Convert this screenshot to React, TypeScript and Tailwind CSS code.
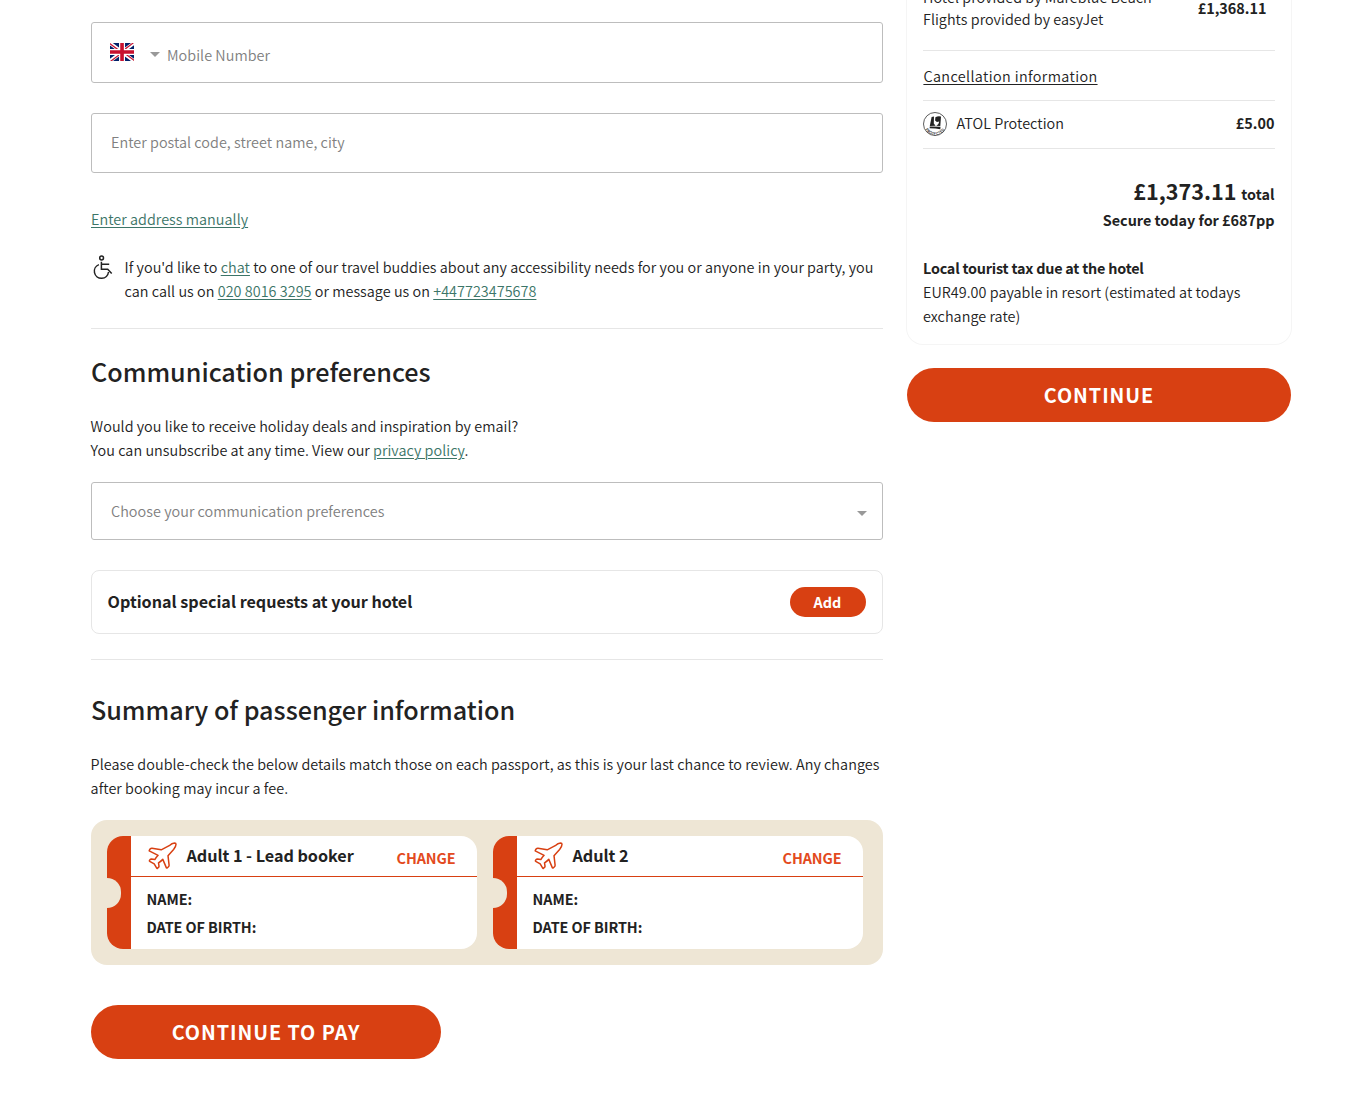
import React from 'react';

const link = "text-[#3c7568] underline decoration-1 underline-offset-2";
const bold = "font-['Noto_Sans_CJK_SC'] font-bold tracking-normal";
const medium = "font-['Noto_Sans_CJK_SC'] font-medium tracking-normal";
const cta = "h-[54px] rounded-full bg-[#d84012] font-['Noto_Sans_CJK_SC'] text-[19.8px] font-bold tracking-[0.93px] text-white";

function UkFlag() {
  return (
    <svg viewBox="0 0 640 480" className="-mt-[2px] h-[18px] w-6">
      <path fill="#012169" d="M0 0h640v480H0z" />
      <path fill="#FFF" d="m75 0 244 181L562 0h78v62L400 241l240 178v61h-80L320 301 81 480H0v-60l239-178L0 64V0h75z" />
      <path fill="#C8102E" d="m424 281 216 159v40L369 281h55zm-184 20 6 35L54 480H0l240-179zM640 0v3L391 191l2-44L590 0h50zM0 0l239 176h-60L0 42V0z" />
      <path fill="#FFF" d="M241 0v480h160V0H241zM0 160v160h640V160H0z" />
      <path fill="#C8102E" d="M0 193v96h640v-96H0zM273 0v480h96V0h-96z" />
    </svg>
  );
}

function Caret() {
  return (
    <svg viewBox="0 0 10 5" className="h-[5px] w-[10px] fill-[#999]">
      <path d="M0 0h10L5 5z" />
    </svg>
  );
}

function Wheelchair() {
  return (
    <svg viewBox="0 0 24 26" fill="none" stroke="#222" strokeWidth="1.5" className="h-[26px] w-6 shrink-0">
      <circle cx="10.6" cy="3" r="1.9" />
      <path d="M10.4 6.8v7.4h6.3l4 4.4M10.4 9.2h7.8M7.9 9.6a7.1 7.1 0 1 0 9.6 7.4" />
    </svg>
  );
}

function Plane() {
  return (
    <svg viewBox="0 0 30 30" fill="none" stroke="#d84012" strokeWidth="1.5" strokeLinejoin="round" strokeLinecap="round" className="h-[30px] w-[30px]">
      <path d="M14.2 9.8 5 8.2q-1.1-.1-1.9.8l-.8 1.300q-.2.600.400.800l8.400 4.200q-1.900 1.900-3.300 4.300l-3.500-.6q-.7 0-1.100.5l-.8 1.100q-.2.500.300.700l4.500 2.600 2.500 4.300q.4.600.800.100l1.200-1.200q.4-.4.300-1l-.5-3.200q2.300-1.500 4.300-3.500l3.500 8.200q.3.700.900.200l1.300-1.100q.7-.7.600-1.600l-1.100-9.400 5.600-6.200q2.400-2.800 2.400-5.200 0-1.300-1.400-1.300-2.700.2-5.400 2.700z" />
    </svg>
  );
}

function AtolBadge() {
  return (
    <svg viewBox="0 0 24 24" className="h-6 w-6">
      <circle cx="12" cy="12" r="11.5" fill="#fff" stroke="#333" strokeWidth=".8" />
      <path fill="#222" d="M8.6 5 11 4.6l-.2 6.800 1.800 2.400-5.800.200zM12.400 5.200q2.800-1.600 5.600-.7L17.300 14l-4-.3q2.900-1.700 2.900-4.200l-2.300.6-1.800-1.700zM6.800 14.600l10.700.200-.2 2.500-4.800-.9-5.900-.1z" />
      <path id="atol-arc" d="M1.200 12.500a10.800 10.800 0 0 0 21.600 0" fill="none" />
      <text className="fill-[#333] text-[3.8px] font-bold tracking-[.3px]">
        <textPath href="#atol-arc" startOffset="50%" textAnchor="middle">PROTECTED</textPath>
      </text>
    </svg>
  );
}

function Ticket({ title }: { title: string }) {
  return (
    <div className="flex h-[113px] w-[370px] overflow-hidden rounded-2xl bg-white">
      <div className="flex w-6 items-center bg-[#d84012] pt-px">
        <div className="h-[30px] w-[14px] rounded-r-[15px] bg-[#eee6d5]" />
      </div>
      <div className={`flex-1 ${bold}`}>
        <div className="flex h-[41px] items-start border-b border-[#d84012] pl-4 pr-[21px]">
          <span className="mt-1"><Plane /></span>
          <h3 className="ml-[9.5px] mt-[7px] flex-1 text-[16.2px] leading-6 tracking-[-0.04px]">{title}</h3>
          <a className="mr-[0.5px] mt-[10px] text-[14.4px] leading-6 tracking-[-0.1px] text-[#e34a20]">CHANGE</a>
        </div>
        <div className="pl-[15.6px] pt-2 text-[14.4px] leading-7 tracking-[-0.08px]">
          <p>NAME:</p>
          <p>DATE OF BIRTH:</p>
        </div>
      </div>
    </div>
  );
}

export default function App() {
  return (
    <div className="flex h-[1107px] items-start gap-6 overflow-hidden whitespace-nowrap bg-white pl-[91px] font-['Noto_Sans_CJK_SC_DemiLight','Noto_Sans_CJK_SC',sans-serif] text-[14.4px] leading-6 tracking-[0.036px] text-[#222]">
      <main className="flex w-[792px] flex-col pt-[22px]">
        <div className="flex h-[61px] items-center rounded-[3px] border border-[#bdbdbd] pl-[18px] text-[#808080]">
          <UkFlag />
          <span className="ml-4 mt-1"><Caret /></span>
          <span className="ml-[7px] mt-1">Mobile Number</span>
        </div>
        <div className="mt-[30px] flex h-[60px] items-center rounded-[3px] border border-[#bdbdbd] pb-[2px] pl-[19px] text-[#808080]">
          Enter postal code, street name, city
        </div>
        <a className={`mt-[34px] self-start ${link}`}>Enter address manually</a>
        <div className="mt-6 flex gap-[9.6px]">
          <Wheelchair />
          <p>
            If you'd like to <a className={link}>chat</a> to one of our travel buddies about any accessibility needs for you or anyone in your party, you<br />
            can call us on <a className={link}>020 8016 3295</a> or message us on <a className={link}>+447723475678</a>
          </p>
        </div>
        <hr className="mt-[25px] border-[#e6e6e6]" />
        <h2 className={`mt-6 text-[25.15px] leading-9 ${medium}`}>Communication preferences</h2>
        <p className="-ml-[0.4px] mt-[25px]">
          Would you like to receive holiday deals and inspiration by email?<br />
          You can unsubscribe at any time. View our <a className={link}>privacy policy</a>.
        </p>
        <div className="mt-5 flex h-[58px] items-center justify-between rounded-[3px] border border-[#bdbdbd] pl-[19px] pr-[15px] text-[#808080]">
          Choose your communication preferences
          <span className="mt-1"><Caret /></span>
        </div>
        <div className="mt-[30px] flex h-16 items-center justify-between rounded-lg border border-[#e6e6e6] px-4">
          <h3 className={`-ml-[0.4px] -mt-[2px] text-[16.12px] ${bold}`}>Optional special requests at your hotel</h3>
          <button className={`h-[30px] w-[76px] rounded-full bg-[#d84012] pr-px text-white ${bold}`}>Add</button>
        </div>
        <hr className="mt-[25px] border-[#e6e6e6]" />
        <h2 className={`mt-[31px] text-[25.15px] leading-9 ${medium}`}>Summary of passenger information</h2>
        <p className="-ml-[0.4px] mt-[25px]">
          Please double-check the below details match those on each passport, as this is your last chance to review. Any changes<br />
          after booking may incur a fee.
        </p>
        <div className="mt-5 flex gap-4 rounded-2xl bg-[#eee6d5] p-4">
          <Ticket title="Adult 1 - Lead booker" />
          <Ticket title="Adult 2" />
        </div>
        <button className={`mt-10 w-[350px] ${cta}`}>CONTINUE TO PAY</button>
      </main>
      <aside className="w-96">
        <section className="h-[344px] rounded-b-2xl px-4 shadow-[0_0_0_1px_#f5f5f5]">
          <div className="flex h-[50px] justify-between">
            <p className="-mt-[14px] leading-[22px]">Hotel provided by Mareblue Beach<br />Flights provided by easyJet</p>
            <span className={`-mt-1 mr-[8.5px] ${bold}`}>£1,368.11</span>
          </div>
          <div className="flex h-[51px] items-center border-y border-[#e6e6e6]">
            <a className="ml-[0.4px] tracking-[0.38px] underline underline-offset-2">Cancellation information</a>
          </div>
          <div className="flex h-12 items-start border-b border-[#e6e6e6] pt-[11px]">
            <AtolBadge />
            <span className="-mt-px ml-[9.5px] flex-1">ATOL Protection</span>
            <span className={`-mt-px mr-[0.5px] ${bold}`}>£5.00</span>
          </div>
          <div className={`mt-[26px] pr-[0.5px] text-right ${bold}`}>
            <p className="leading-8"><span className="mr-[1.5px] text-[21.6px]">£1,373.11</span> total</p>
            <p className="-mt-[2px] tracking-[-0.02px]">Secure today for £687pp</p>
          </div>
          <div className="mt-6">
            <p className="font-['Noto_Sans_CJK_SC'] font-bold tracking-[-0.22px]">Local tourist tax due at the hotel</p>
            <p>EUR49.00 payable in resort (estimated at todays<br />exchange rate)</p>
          </div>
        </section>
        <button className={`mt-6 w-full ${cta}`}>CONTINUE</button>
      </aside>
    </div>
  );
}
